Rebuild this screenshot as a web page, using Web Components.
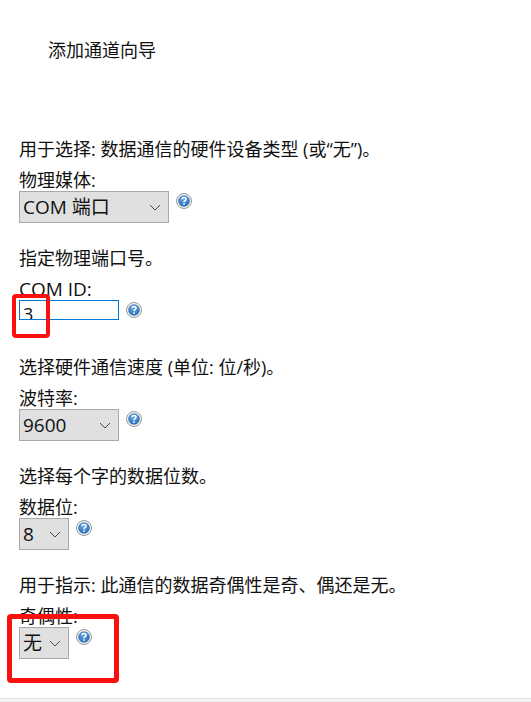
<!DOCTYPE html>
<html lang="zh-CN">
<head>
<meta charset="utf-8">
<title>添加通道向导</title>
<style>
html, body { margin: 0; background: #fff; }
body {
    font-family: "Open Sans", "Noto Sans CJK SC", sans-serif;
    font-size: 18px;
    color: #111;
}
</style>
</head>
<body>
<wizard-page heading="添加通道向导">
    <wizard-field desc="用于选择: 数据通信的硬件设备类型 (或“无”)。" label="物理媒体:">
        <drop-select value="COM 端口" width="150"></drop-select>
    </wizard-field>
    <wizard-field desc="指定物理端口号。" label="COM ID:" label-size="19">
        <text-box value="3" width="100"></text-box>
    </wizard-field>
    <wizard-field desc="选择硬件通信速度 (单位: 位/秒)。" label="波特率:">
        <drop-select value="9600" width="100"></drop-select>
    </wizard-field>
    <wizard-field desc="选择每个字的数据位数。" label="数据位:">
        <drop-select value="8" width="50"></drop-select>
    </wizard-field>
    <wizard-field desc="用于指示: 此通信的数据奇偶性是奇、偶还是无。" label="奇偶性:">
        <drop-select value="无" width="50"></drop-select>
    </wizard-field>
    <red-mark style="left:12px;top:294px;width:38px;height:44px"></red-mark>
    <red-mark style="left:7px;top:614px;width:112px;height:69px;border-width:5px"></red-mark>
</wizard-page>

<script>
class wizardPage extends HTMLElement {
    constructor() {
        super();
        this.attachShadow({ mode: 'open' })
    }
    connectedCallback() {
        this.shadowRoot.innerHTML = `
        <style>
        :host {
            display: block;
            position: relative;
            height: 702px;
            box-sizing: border-box;
            overflow: hidden;
        }
        h1 {
            margin: 0;
            padding: 39px 0 0 48px;
            height: 138px;
            box-sizing: border-box;
            font-size: 18px;
            font-weight: 400;
            line-height: 22px;
        }
        .bottom {
            position: absolute;
            left: 0;
            right: 0;
            bottom: 0;
            height: 4px;
            box-sizing: border-box;
            border-top: 1px solid #e2e2e2;
            background: #f3f3f3;
        }
        </style>
        <h1>${this.getAttribute('heading')}</h1>
        <slot></slot>
        <div class="bottom"></div>
        `;
    }
}

class wizardField extends HTMLElement {
    constructor() {
        super();
        this.attachShadow({ mode: 'open' })
    }
    connectedCallback() {
        const labelSize = this.getAttribute('label-size') || 18;
        this.shadowRoot.innerHTML = `
        <style>
        :host {
            display: block;
            padding: 0 0 24px 19px;
            line-height: 22px;
        }
        .desc { margin-bottom: 9px; white-space: nowrap; }
        .label { font-size: ${labelSize}px; height: 22px; }
        .row { display: flex; align-items: flex-start; gap: 7px; height: 32px; }
        help-icon { margin-top: 2px; }
        </style>
        <div class="desc">${this.getAttribute('desc')}</div>
        <div class="label">${this.getAttribute('label')}</div>
        <div class="row"><slot></slot><help-icon></help-icon></div>
        `;
    }
}

class dropSelect extends HTMLElement {
    constructor() {
        super();
        this.attachShadow({ mode: 'open' })
    }
    connectedCallback() {
        this.shadowRoot.innerHTML = `
        <style>
        :host {
            display: flex;
            align-items: center;
            justify-content: space-between;
            box-sizing: border-box;
            width: ${this.getAttribute('width')}px;
            height: 32px;
            padding: 0 7px 0 3px;
            background: #e0e0e0;
            border: 1px solid #a9a9a9;
            font-size: 19px;
            white-space: nowrap;
        }
        svg { display: block; flex: none; }
        </style>
        <span>${this.getAttribute('value')}</span>
        <svg width="12" height="7" viewBox="0 0 12 7"><path d="M1 1l5 5 5-5" fill="none" stroke="#4a4a4a" stroke-width="1"/></svg>
        `;
    }
}

class textBox extends HTMLElement {
    constructor() {
        super();
        this.attachShadow({ mode: 'open' })
    }
    connectedCallback() {
        this.shadowRoot.innerHTML = `
        <style>
        :host {
            display: block;
            box-sizing: border-box;
            width: ${this.getAttribute('width')}px;
            height: 20px;
            padding: 2px 0 0 3px;
            border: 1px solid #0078d7;
            overflow: hidden;
            line-height: 22px;
            background: #fff;
        }
        </style>
        <span>${this.getAttribute('value')}</span>
        `;
    }
}

class helpIcon extends HTMLElement {
    constructor() {
        super();
        this.attachShadow({ mode: 'open' })
    }
    connectedCallback() {
        this.shadowRoot.innerHTML = `
        <style>
        :host { display: block; width: 16px; height: 16px; flex: none; }
        svg { display: block; }
        </style>
        <svg width="16" height="16" viewBox="0 0 16 16">
            <defs>
                <radialGradient id="g" cx="45%" cy="35%" r="70%">
                    <stop offset="0" stop-color="#6aa6e0"/>
                    <stop offset="1" stop-color="#2469b5"/>
                </radialGradient>
            </defs>
            <circle cx="8" cy="8" r="7.500" fill="#f2f2f2" stroke="#9a9a9a" stroke-width="1"/>
            <circle cx="8" cy="8" r="5.800" fill="url(#g)"/>
            <path d="M5.900 6.300c.1-1.200 1-1.800 2.100-1.800 1.200 0 2.100.7 2.100 1.700 0 1.500-2.100 1.500-2.100 3" fill="none" stroke="#fff" stroke-width="1.500"/>
            <rect x="7.200" y="10.300" width="1.600" height="1.500" fill="#fff"/>
        </svg>
        `;
    }
}

class redMark extends HTMLElement {
    constructor() {
        super();
        this.attachShadow({ mode: 'open' })
    }
    connectedCallback() {
        this.shadowRoot.innerHTML = `
        <style>
        :host {
            display: block;
            position: absolute;
            box-sizing: border-box;
            border: 4px solid #fb0f0f;
            border-radius: 4px;
        }
        </style>
        `;
    }
}

customElements.define('wizard-page', wizardPage);
customElements.define('wizard-field', wizardField);
customElements.define('drop-select', dropSelect);
customElements.define('text-box', textBox);
customElements.define('help-icon', helpIcon);
customElements.define('red-mark', redMark);
</script>
</body>
</html>
